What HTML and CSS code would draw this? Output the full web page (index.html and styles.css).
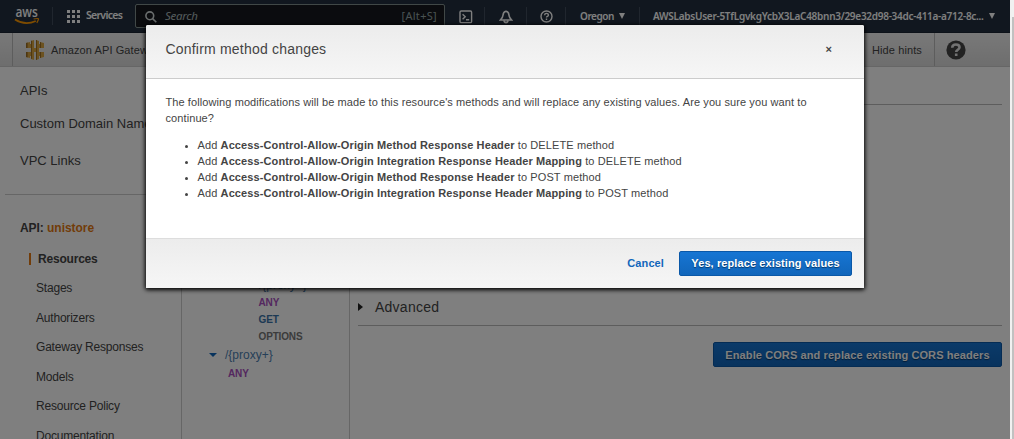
FILE: index.html
```html
<!DOCTYPE html>
<html lang="en">
<head>
<meta charset="utf-8">
<title>API Gateway</title>
<link rel="stylesheet" href="styles.css">
</head>
<body>
<div class="page">
  <header class="nav">
    <svg class="logo" width="28" height="26" viewBox="0 0 28 26" role="img" aria-label="aws">
      <text x="1.4" y="17" class="logo-word" textLength="22.4" lengthAdjust="spacingAndGlyphs">aws</text>
      <path d="M1 19.5Q11 26 21.8 21" fill="none" stroke="#f90" stroke-width="1.7"/>
      <path d="M19.6 19Q25 17.9 24.5 19.3T22.8 22.9" fill="none" stroke="#f90" stroke-width="1.2"/>
    </svg>
    <span class="logo-sep"></span>
    <svg class="grid" width="13" height="13" viewBox="0 0 13 13" fill="#fff"><path d="M0 0h3v3H0zM5 0h3v3H5zM10 0h3v3h-3zM0 5h3v3H0zM5 5h3v3H5zM10 5h3v3h-3zM0 10h3v3H0zM5 10h3v3H5zM10 10h3v3h-3z"/></svg>
    <span class="services">Services</span>
    <div class="search">
      <svg width="12" height="12" viewBox="0 0 12 12" fill="none" stroke="#d5dbdb" stroke-width="1.6"><circle cx="4.8" cy="4.8" r="3.9"/><path d="M7.6 7.6l3.7 3.7"/></svg>
      <span class="search-hint">Search</span>
      <span class="search-key">[Alt+S]</span>
    </div>
    <div class="tool tool-shell"><svg width="14" height="14" viewBox="0 0 14 14" fill="none" stroke="#fff" stroke-width="1.4"><rect x="1" y="1" width="11.6" height="11.6" rx="1.2"/><path d="M3.6 4.2l2.6 2.5-2.6 2.5M7 9.8h3.2"/></svg></div>
    <div class="tool tool-bell"><svg width="14" height="14" viewBox="0 0 14 14" fill="none" stroke="#fff" stroke-width="1.6"><path d="M1.4 10Q3.8 7.6 4 5.2 4.2 2 7 1.3 9.8 2 10 5.2q.2 2.4 2.6 4.8z"/><path d="M5 10.4q.2 2.2 2 2.2t2-2.2"/></svg></div>
    <div class="tool tool-help"><svg width="13" height="13" viewBox="0 0 13 13" fill="none" stroke="#fff" stroke-width="1.4"><circle cx="6.5" cy="6.5" r="5.5"/><path d="M4.6 5.2q.1-1.8 1.9-1.8t1.9 1.5q0 1-1 1.5-.9.4-.9 1.2M6.5 8.6v1.4"/></svg></div>
    <div class="region"><span>Oregon</span><i class="caret"></i></div>
    <div class="account"><span>AWSLabsUser-5TfLgvkgYcbX3LaC48bnn3/29e32d98-34dc-411a-a712-8c...</span><i class="caret"></i></div>
  </header>
  <div class="subnav">
    <svg class="gateway" width="18" height="20" viewBox="0 0 18 20"><path fill="#d9a441" d="M0 3l4-1v2h1V1l3-1v8H0zM10 0l3 1v3h1V2l4 1v5h-8zM0 12h8v8l-3-1v-3H4v2l-4-1zM10 12h8v5l-4 1v-2h-1v3l-3 1zM5 8h8v4H5z"/><path fill="#9c6f22" d="M0 3l1.6-.4V8H0zM5 1l1-.4V19l-1-.4zM10 0l1 .3v19.4l-1 .3zM0 12h1.6v5.4L0 17zM14 2l1 .3V8h-1zM14 12h1v5.7l-1 .3z"/></svg>
    <span class="product">Amazon API Gateway</span>
    <span class="hide-hints">Hide hints</span>
    <div class="help-box"><svg width="20" height="20" viewBox="0 0 20 20"><circle cx="10" cy="10" r="9.6" fill="#444"/><path d="M6.2 7.8q.1-3.3 3.7-3.3t3.6 2.8q0 1.5-1.8 2.5-1.5.8-1.5 2.1M10.2 13.4v2.5" fill="none" stroke="#e4e4e4" stroke-width="2.6"/></svg></div>
  </div>
  <div class="columns">
    <aside class="side">
      <nav class="top-links">
        <a class="apis">APIs</a><a class="domains">Custom Domain Names</a><a class="vpc">VPC Links</a>
      </nav>
      <div class="api">API: <b>unistore</b></div>
      <nav class="sub-links">
        <a class="current">Resources</a><a>Stages</a><a>Authorizers</a><a>Gateway Responses</a><a>Models</a><a>Resource Policy</a><a>Documentation</a>
      </nav>
    </aside>
    <section class="tree">
      <div class="path deep">/{proxy+}</div>
      <div class="verb deep any">ANY</div>
      <div class="verb deep get">GET</div>
      <div class="verb deep">OPTIONS</div>
      <div class="path"><i class="open"></i>/{proxy+}</div>
      <div class="verb any">ANY</div>
    </section>
    <main class="detail">
      <div class="rule"></div>
      <div class="advanced"><i class="closed"></i><span>Advanced</span></div>
      <button class="btn enable">Enable CORS and replace existing CORS headers</button>
    </main>
  </div>
</div>
<div class="scrollbar"><div class="thumb"></div></div>
<div class="backdrop">
  <div class="dialog">
    <div class="dialog-head"><span class="title">Confirm method changes</span><span class="close">×</span></div>
    <div class="dialog-body">
      <p>The following modifications will be made to this resource's methods and will replace any existing values. Are you sure you want to<br>continue?</p>
      <ul>
        <li>Add <b>Access-Control-Allow-Origin Method Response Header</b> to DELETE method</li>
        <li>Add <b>Access-Control-Allow-Origin Integration Response Header Mapping</b> to DELETE method</li>
        <li>Add <b>Access-Control-Allow-Origin Method Response Header</b> to POST method</li>
        <li>Add <b>Access-Control-Allow-Origin Integration Response Header Mapping</b> to POST method</li>
      </ul>
    </div>
    <div class="dialog-foot"><a class="cancel">Cancel</a><button class="btn confirm">Yes, replace existing values</button></div>
  </div>
</div>
</body>
</html>
```
FILE: styles.css
```css
* { box-sizing: border-box; }
body {
  margin: 0;
  width: 1014px;
  height: 439px;
  overflow: hidden;
  display: flex;
  font-family: "Liberation Sans", Arial, sans-serif;
  font-size: 11px;
  color: #444;
  background: #fff;
}
svg { display: block; flex: none; }
.page { width: 1010px; height: 439px; overflow: hidden; display: flex; flex-direction: column; }

/* Global navigation */
.nav {
  height: 33px;
  flex: none;
  display: flex;
  background: #232f3e;
  border-bottom: 1px solid #1b2532;
  color: #fff;
  font-family: "Noto Sans", sans-serif;
  font-weight: 600;
  font-size: 10px;
  line-height: 14px;
}
.logo { margin-left: 14px; }
.logo-word { font: 600 14px "Open Sans", sans-serif; fill: #fff; }
.logo-sep { width: 1px; height: 18px; margin: 7px 14px 0 10px; background: #414d5c; }
.grid { margin-top: 10px; }
.services { margin: 8px 0 0 6px; width: 36px; font-size: 10.5px; letter-spacing: -0.7px; white-space: nowrap; }
.search {
  width: 310px;
  height: 24px;
  margin: 4px 0 0 13px;
  border: 1px solid #83918f;
  border-radius: 2px;
  background: #16191f;
  display: flex;
  padding: 6px 7px 0 9px;
  font-weight: 400;
  font-size: 11.5px;
}
.search-hint { margin: -2px 0 0 8px; font-style: italic; color: #aab7b8; letter-spacing: -0.3px; }
.search-key { margin: -2px 0 0 auto; color: #95a5a6; letter-spacing: 0.3px; font-size: 11px; }
.tool { height: 18px; margin-top: 7px; padding-top: 3px; border-right: 1px solid #414d5c; }
.tool-shell { width: 40px; padding-left: 14px; }
.tool-bell { width: 42px; padding-left: 14px; }
.tool-help { width: 39px; padding-left: 13px; }
.region { width: 74px; height: 18px; margin-top: 7px; border-right: 1px solid #414d5c; padding-left: 14px; display: flex; align-items: center; gap: 5px; letter-spacing: -0.45px; }
.account { margin: 7px 0 0 13px; height: 18px; display: flex; align-items: center; gap: 5px; white-space: nowrap; letter-spacing: -0.27px; }
.caret { border: 3.5px solid transparent; border-top: 6px solid #fff; border-bottom: 0; }

/* Service bar */
.subnav {
  height: 34px;
  flex: none;
  display: flex;
  align-items: center;
  background: linear-gradient(#f2f2f2, #dcdcdc);
  border-bottom: 1px solid #ccc;
  letter-spacing: 0.1px;
}
.subnav::before { content: ""; width: 12px; height: 33px; border-right: 1px solid #bbb; }
.gateway { margin-left: 13px; }
.product { margin-left: 7px; width: 821px; white-space: nowrap; }
.hide-hints { width: 62px; white-space: nowrap; }
.help-box { height: 33px; padding: 7px 0 0 11px; border-left: 1px solid #bbb; }

/* Page columns */
.columns { flex: 1; display: flex; min-height: 0; }
.side { width: 182px; border-right: 1px solid #ccc; flex: none; overflow: hidden; }
.top-links { margin-left: 5px; padding: 7px 0 0 15px; height: 128px; border-bottom: 1px solid #ccc; font-size: 13px; line-height: 33px; display: flex; flex-direction: column; white-space: nowrap; }
.vpc { margin-top: 4px; }
.api { padding: 25px 0 0 20px; font-size: 12px; line-height: 16px; font-weight: bold; height: 49px; letter-spacing: -0.05px; }
.api b { color: #e47911; }
.sub-links { display: flex; flex-direction: column; padding-left: 29px; font-size: 12px; line-height: 29.5px; letter-spacing: -0.2px; }
.sub-links a { padding-left: 7px; }
.sub-links .current { border-left: 2px solid #e47911; line-height: 12px; margin: 9px 0; font-weight: bold; }
.tree { width: 168px; border-right: 1px solid #ccc; padding-top: 209px; flex: none; }
.path { display: flex; align-items: center; height: 20px; padding-left: 27px; gap: 8px; color: #4d7fb0; font-size: 12px; }
.path.deep { padding-left: 77px; height: 18px; }
.verb { height: 17px; padding-left: 46px; line-height: 17px; font-size: 10px; font-weight: bold; color: #777; letter-spacing: -0.15px; }
.verb.deep { padding-left: 76.5px; }
.verb.any { color: #a84fc0; }
.verb.get { color: #3973a8; }
.open { border: 4px solid transparent; border-top-color: #1166bb; border-bottom: 0; }
.detail { flex: 1; padding: 37px 8px 0; }
.rule { border-top: 1px solid #bbb; }
.advanced { margin-top: 184px; height: 37px; display: flex; align-items: center; gap: 12px; border-bottom: 1px solid #bbb; font-size: 14px; letter-spacing: 0.25px; }
.closed { border: 4px solid transparent; border-left: 5px solid #222; border-right: 0; }
.btn {
  width: 173px;
  height: 25px;
  padding: 0;
  border: 1px solid #0a58a8;
  border-radius: 2px;
  background: linear-gradient(#1675d3, #1166bb);
  color: #fff;
  font: bold 11px "Liberation Sans", Arial, sans-serif;
  letter-spacing: 0.1px;
  text-shadow: 0 1px 1px #05386b;
  white-space: nowrap;
}
.enable { display: block; width: 289px; margin: 16px 0 0 auto; }
.confirm { padding-bottom: 2px; }

.scrollbar { width: 4px; height: 439px; background: #f1f1f1; padding: 17px 0 0 2px; }
.thumb { height: 422px; background: #c1c1c1; }

/* Confirmation dialog */
.backdrop { position: absolute; inset: 0 4px 0 0; background: rgba(0, 0, 0, 0.5); }
.dialog {
  width: 718px;
  height: 263px;
  margin: 25px 0 0 146px;
  border-radius: 2px;
  background: #fff;
  box-shadow: 0 1px 4px 1px #000;
  display: flex;
  flex-direction: column;
}
.dialog-head { height: 54px; display: flex; justify-content: space-between; padding: 15px 32px 0 19.5px; background: linear-gradient(#ececec, #f6f6f6); border-bottom: 1px solid #ccc; border-radius: 2px 2px 0 0; }
.title { font-size: 14px; line-height: 18px; letter-spacing: 0.2px; }
.close { font-size: 11px; line-height: 18px; font-weight: bold; }
.dialog-body { flex: 1; padding: 15px 19px 0 19.5px; line-height: 16px; white-space: nowrap; letter-spacing: 0.11px; }
.dialog-body p { margin: 0; letter-spacing: 0.09px; }
.dialog-body ul { margin: 11px 0 0; padding-left: 32px; }
.dialog-foot { height: 50px; display: flex; align-items: center; justify-content: flex-end; gap: 15px; padding: 0 12px 0 0; border-top: 1px solid #ddd; background: linear-gradient(#ececec, #f6f6f6); letter-spacing: 0.1px; }
.cancel { color: #1166bb; font-weight: bold; padding-bottom: 2px; }
```
